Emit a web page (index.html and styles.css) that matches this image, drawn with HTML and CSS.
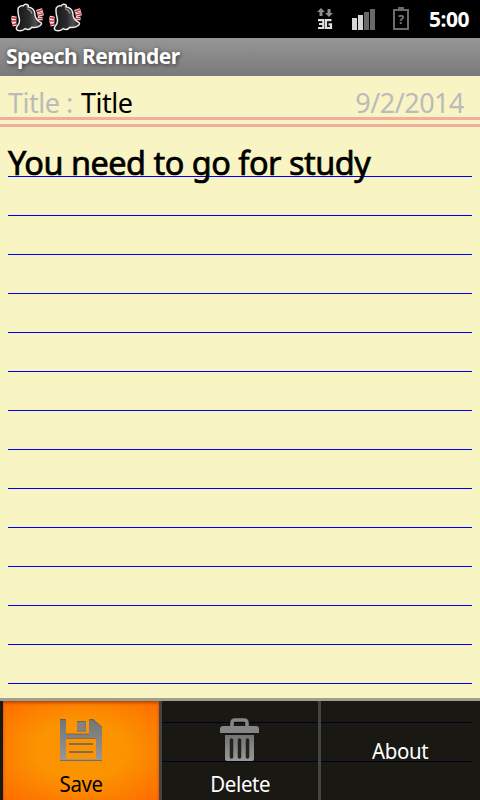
FILE: index.html
```html
<!DOCTYPE html>
<html lang="en">
<head>
    <meta charset="UTF-8">
    <meta name="viewport" content="width=device-width, initial-scale=1.0">
    <title>Speech Reminder</title>
    <link rel="stylesheet" href="styles.css">
</head>
<body>

<!-- bell shape used by both notifications -->
<svg class="defs" width="0" height="0">
    <defs>
        <linearGradient id="metal" x1="0" y1="0" x2="0" y2="1">
            <stop offset="0" stop-color="#737373"/>
            <stop offset="1" stop-color="#989898"/>
        </linearGradient>
        <linearGradient id="bell-fill" x1="0" y1="0" x2="1" y2="0">
            <stop offset="0" stop-color="#161616"/>
            <stop offset="0.5" stop-color="#2b2b2b"/>
            <stop offset="0.75" stop-color="#505054"/>
            <stop offset="1" stop-color="#1c1c1c"/>
        </linearGradient>
        <symbol id="bell" viewBox="0 0 34 32">
            <path d="M27 9l6-2M28 12.500l6-1.500M28 16l5 0M1 15l5 1M1 18.500h5M2 22.500l4-1" stroke="#f4f4f4" stroke-width="3.600"/>
            <path d="M8 5Q10 2 13 3Q15 0 18 2Q19 3 18 4Q24 5 25 10Q25 17 31 20Q33 21 31 23Q28 26 22 25Q19 29 15 26.500Q11 30 7 28Q5 26 7 24Q10 21 9 16Q7 9 8 5Z" fill="url(#bell-fill)" stroke="#eeeeee" stroke-width="1.500"/>
            <path d="M27 9l6-2M28 12.500l6-1.500M28 16l5 0M1 15l5 1M1 18.500h5M2 22.500l4-1" stroke="#e0222c" stroke-width="1.500"/>
            <path d="M17 6Q21 7 22 11" fill="none" stroke="#999" stroke-width="1.300"/>
        </symbol>
    </defs>
</svg>

<header class="status-bar">
    <div class="notifications">
        <svg class="bell"><use href="#bell"/></svg>
        <svg class="bell"><use href="#bell"/></svg>
    </div>
    <div class="status-icons">
        <svg class="network" width="16" height="22" viewBox="0 0 16 22">
            <path d="M4 0l4 4H5.500v4h-3V4H0zM10.500 1h3v4H16l-4 4-4-4h2.500z" fill="#8c8c8c"/>
            <path d="M1 12.200h5.300V20H1M2 16h4M14.500 12.200H9V20h5v-3.600h-2.500" fill="none" stroke="#dedede" stroke-width="2.200"/>
        </svg>
        <svg class="signal" width="24" height="22" viewBox="0 0 24 22">
            <path d="M0 9h5v12H0zM6 6h5v15H6z" fill="#d6d6d6"/>
            <path d="M12 3h5v18h-5zM18 0h5v21h-5z" fill="#696969"/>
        </svg>
        <svg class="battery" width="16" height="23" viewBox="0 0 16 23">
            <path d="M5 0h6v2h5v21H0V2h5z" fill="#6b6b6b"/>
            <path d="M2 4h12v17H2z" fill="#000"/>
            <text x="8" y="17" class="battery-mark">?</text>
        </svg>
        <span class="clock">5:00</span>
    </div>
</header>

<h1 class="title-bar">Speech Reminder</h1>

<main class="note">
    <div class="note-head">
        <span class="note-label">Title :</span>
        <span class="note-title">Title</span>
        <span class="note-date">9/2/2014</span>
    </div>
    <div class="note-body"><span class="note-text">You need to go for study</span></div>
</main>

<nav class="menu">
    <a class="menu-item active">
        <svg class="menu-icon" width="44" height="44" viewBox="0 0 44 44">
            <path d="M1 1H7V16H30V1H34L43 9V43H1ZM18 3V14H27V3ZM7 20V41H37V20Z" fill="url(#metal)" fill-rule="evenodd"/>
            <path d="M18 3H26V13H18Z" fill="#8a8278"/>
            <path d="M1 1.500H6M7 16H30M7 20.500H37M31 1.500H34L43 9M1 42.500H43M18 3.500H26" fill="none" stroke="#555" stroke-width="1" opacity="0.6"/>
            <path d="M10 26H34M10 34H34" stroke="#7c6d5e" stroke-width="2"/>
        </svg>
        <span class="menu-label">Save</span>
    </a>
    <a class="menu-item">
        <svg class="menu-icon" width="44" height="44" viewBox="0 0 44 44">
            <path d="M14 8V5Q14 2 17 2H26Q29 2 29 5V8" fill="none" stroke="#858585" stroke-width="3.500"/>
            <path d="M5 8H38Q41 8 41 11V15H2V11Q2 8 5 8Z" fill="#858585"/>
            <path d="M7 17H36V41Q36 43 34 43H9Q7 43 7 41Z" fill="url(#metal)"/>
            <path d="M13.500 22V39M21.500 22V39M29.500 22V39" stroke="#22221e" stroke-width="3.500" stroke-linecap="round"/>
        </svg>
        <span class="menu-label">Delete</span>
    </a>
    <a class="menu-item text-only">
        <span class="menu-label">About</span>
    </a>
</nav>

</body>
</html>
```
FILE: styles.css
```css
* {
    box-sizing: border-box;
}

body {
    margin: 0;
    height: 800px;
    overflow: hidden;
    background: #f9f4c3;
    font-family: "Noto Sans", "Open Sans", sans-serif;
    position: relative;
}

.defs {
    position: absolute;
}

/* Status bar */
.status-bar {
    display: flex;
    justify-content: space-between;
    height: 38px;
    padding: 0 11px 0 10px;
    background: #000000;
}

.notifications {
    display: flex;
    gap: 4px;
    padding-top: 3px;
}

.bell {
    width: 34px;
    height: 31px;
}

.status-icons {
    display: flex;
    align-items: flex-start;
}

.network {
    margin: 8px 19px 0 0;
}

.signal {
    margin: 9px 17px 0 0;
}

.battery {
    margin: 7px 20px 0 0;
}

.battery-mark {
    font-size: 13px;
    font-weight: bold;
    fill: #777777;
    text-anchor: middle;
}

.clock {
    color: #ffffff;
    font-size: 21px;
    font-weight: bold;
    line-height: 38px;
    letter-spacing: -0.5px;
}

/* Title bar */
.title-bar {
    height: 38px;
    margin: 0;
    padding-left: 6px;
    background: linear-gradient(#969696, #7a7a7a);
    color: #ffffff;
    font-size: 21px;
    font-weight: bold;
    line-height: 37px;
    letter-spacing: -0.55px;
    text-shadow: 1px 1px 4px #333333;
}

/* Note paper */
.note-head {
    display: flex;
    height: 51px;
    padding: 0 15px 0 8px;
    border-bottom: 3px solid #f0ae9c;
    background: linear-gradient(#f0ae9c, #f0ae9c) 0 41px / 100% 3px no-repeat;
    font-size: 27px;
    line-height: 54px;
    letter-spacing: -0.5px;
    white-space: nowrap;
}

.note-label,
.note-date {
    color: #bbbbbb;
}

.note-label {
    width: 73px;
}

.note-date {
    margin-left: auto;
    margin-right: 1px;
}

.note-body {
    height: 673px;
    margin: 0 8px;
    padding-top: 10px;
    background: repeating-linear-gradient(transparent 0 38px, #0000f4 38px 39px) 0 11px no-repeat;
}

.note-text {
    display: inline-block;
    font-size: 33px;
    line-height: 52px;
    white-space: nowrap;
    letter-spacing: -0.5px;
    -webkit-text-stroke: 0.7px #000000;
    transform: scaleX(0.983);
    transform-origin: left;
}

/* Options menu, the paper shows through */
.menu {
    position: absolute;
    left: 0;
    bottom: 0;
    display: flex;
    width: 480px;
    height: 102px;
    border-top: 3px solid #9f9f8f;
    background: rgba(0, 0, 0, 0.9);
    color: #ffffff;
}

.menu-item {
    display: flex;
    flex-direction: column;
    align-items: center;
    width: 159px;
    padding-top: 17px;
    border-right: 3px solid #444442;
}

.menu-item.active {
    width: 162px;
    border-left: 3px solid #191915;
    background: radial-gradient(ellipse at center, #fb9400 40%, #ff6500 110%);
    box-shadow: inset 0 2px 3px #b84800;
    color: #000000;
}

.menu-item.text-only {
    padding-top: 34px;
    border-right: none;
}

.menu-label {
    font-size: 22px;
    line-height: 30px;
    letter-spacing: -0.4px;
    transform: scaleX(0.93);
}

.menu-icon + .menu-label {
    margin-top: 6px;
}
```
